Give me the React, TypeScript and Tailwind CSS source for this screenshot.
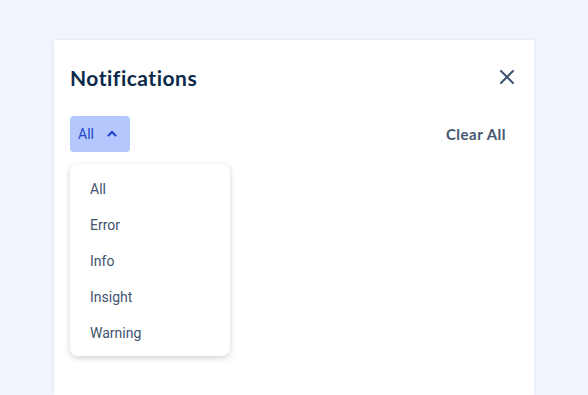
import React from "react";

export default function App() {
  const items = ["All", "Error", "Info", "Insight", "Warning"];
  return (
    <div className="w-[588px] h-[395px] overflow-hidden bg-[#f1f6fe] pt-[40px] pl-[54px]">
      <div className="w-[480px] h-[355px] bg-white shadow-[0_0_3px_rgba(30,60,120,0.12)] px-4 pt-[24px]">
        <div className="flex items-center justify-between h-[26px]">
          <h1
            className="text-[21px] font-bold text-[#0b2a4a] leading-none tracking-[0.5px]"
            style={{ fontFamily: "Lato, 'Open Sans', sans-serif" }}
          >
            Notifications
          </h1>
          <button className="mr-[3px] text-[#3e5470]">
            <svg width="16" height="16" viewBox="0 0 16 16" fill="none" stroke="currentColor" strokeWidth="2" strokeLinecap="round">
              <path d="M2 2l12 12M14 2L2 14" />
            </svg>
          </button>
        </div>
        <div className="flex items-center justify-between mt-[26px]">
          <div className="relative">
            <button
              className="flex items-center w-[60px] h-[36px] rounded-[4px] bg-[#b4c8fd] pl-[8px] text-[#2446c8] text-[14px]"
              style={{ fontFamily: "Roboto, sans-serif" }}
            >
              <span>All</span>
              <svg className="ml-[12px]" width="12" height="12" viewBox="0 0 12 12" fill="none" stroke="currentColor" strokeWidth="2.2" strokeLinecap="round" strokeLinejoin="round">
                <path d="M2.5 7.5L6 4l3.5 3.5" />
              </svg>
            </button>
            <div
              className="absolute left-0 top-[48px] w-[160px] rounded-[8px] bg-white shadow-[0_2px_6px_rgba(0,0,0,0.18)] pt-[7px] pb-[5px] z-10"
              style={{ fontFamily: "Roboto, sans-serif" }}
            >
              {items.map((it) => (
                <div key={it} className="h-[36px] flex items-center pl-[20px] text-[14px] text-[#41536e]">
                  {it}
                </div>
              ))}
            </div>
          </div>
          <button
            className="mr-[12px] text-[15px] font-bold text-[#45576f] tracking-[0.5px]"
            style={{ fontFamily: "Lato, sans-serif" }}
          >
            Clear All
          </button>
        </div>
      </div>
    </div>
  );
}
